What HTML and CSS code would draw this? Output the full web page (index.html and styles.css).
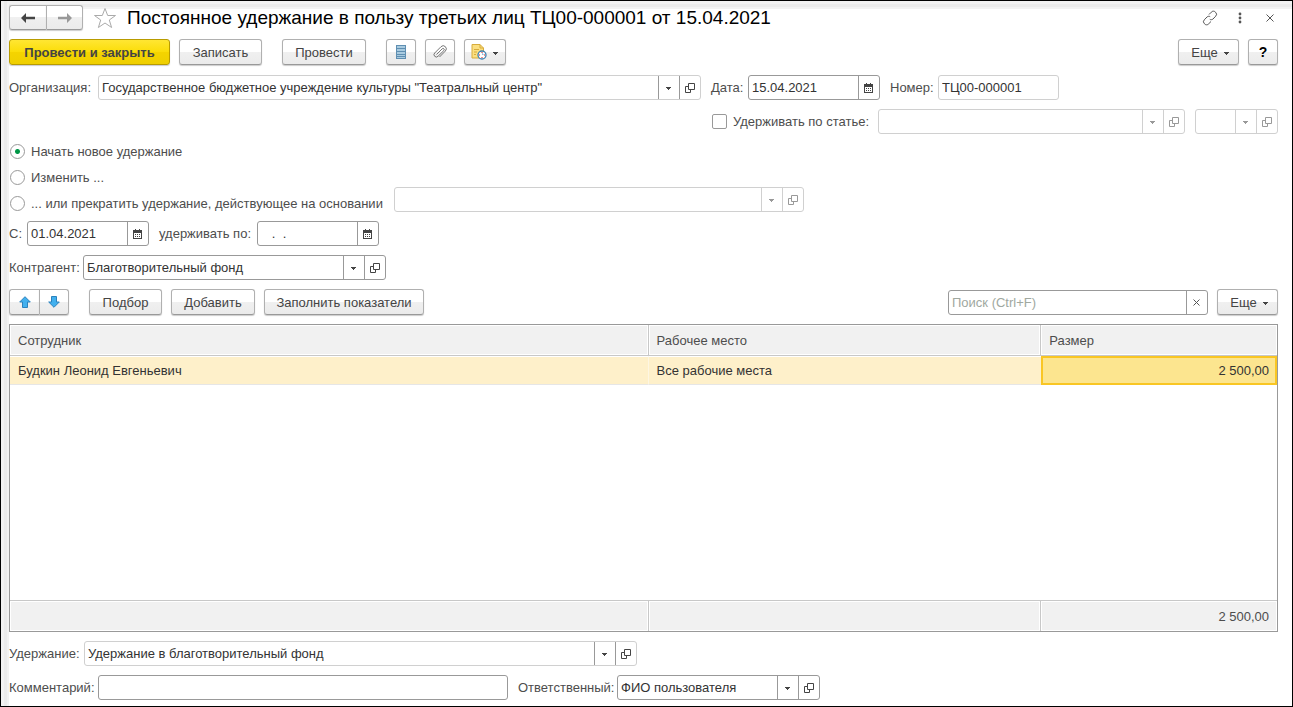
FILE: index.html
```html
<!DOCTYPE html>
<html lang="ru">
<head>
<meta charset="utf-8">
<title>Постоянное удержание в пользу третьих лиц</title>
<link rel="stylesheet" href="styles.css">
</head>
<body>
<svg class="sprite" aria-hidden="true">
  <symbol id="caret" viewBox="0 0 6 4"><path d="M0 1h5v1H0zM1 2h3v1H1zM2 3h1v1H2z" fill="currentColor"/></symbol>
  <symbol id="open" viewBox="0 0 10 10"><path d="M3.500 .5h6v6h-6zM3.500 3.500h-3v6h5v-3" fill="none" stroke="currentColor"/></symbol>
  <symbol id="cal" viewBox="0 0 10 10"><path d="M0 1h2V0h1v1h3V0h1v1h2v9H0zM1 4v5h7V4z" fill="currentColor" fill-rule="evenodd"/><path d="M2 5h1v1H2zM4 5h1v1H4zM6 5h1v1H6zM2 7h1v1H2zM4 7h1v1H4zM6 7h1v1H6z" fill="currentColor"/></symbol>
</svg>
<main class="window">
  <header class="bar head">
    <div class="group">
      <button class="btn nav" aria-label="Назад"><svg width="14" height="10" viewBox="0 0 14 10"><path d="M0 5 5 0v3.800h9v2.400H5V10z" fill="#444"/></svg></button>
      <button class="btn nav" aria-label="Вперед"><svg width="14" height="10" viewBox="0 0 14 10"><path d="M14 5 9 0v3.800H0v2.400h9V10z" fill="#999"/></svg></button>
    </div>
    <button class="plain star" aria-label="В избранное"><svg width="24" height="22" viewBox="0 0 24 22"><path d="M12 1.500 14.700 8.500H22.500L16.300 13 18.600 20.500 12 16 5.400 20.500 7.700 13 1.500 8.500H9.300Z" fill="#fff" stroke="#aaa"/></svg></button>
    <h1 class="title">Постоянное удержание в пользу третьих лиц ТЦ00-000001 от 15.04.2021</h1>
    <div class="tools">
      <button class="plain" aria-label="Ссылка"><svg width="16" height="16" viewBox="0 0 16 16" fill="none" stroke="#555"><path d="M7 4.500 9.300 2.200a2.700 2.700 0 0 1 4.300.1 2.700 2.700 0 0 1 .1 3.900L11 9c-1 .9-2.300.9-3.200.3M9 11.500l-2.300 2.300a2.700 2.700 0 0 1-4.300-.1 2.700 2.700 0 0 1-.1-3.900L5 7c1-.9 2.300-.9 3.200-.3"/></svg></button>
      <button class="plain" aria-label="Меню"><svg width="4" height="12" viewBox="0 0 4 12" fill="#555"><circle cx="2" cy="2" r="1.400"/><circle cx="2" cy="6" r="1.400"/><circle cx="2" cy="10" r="1.400"/></svg></button>
      <button class="plain" aria-label="Закрыть"><svg width="8" height="8" viewBox="0 0 8 8" stroke="#555"><path d="m.5.5 7 7m0-7-7 7"/></svg></button>
    </div>
  </header>

  <div class="bar commands">
    <button class="btn primary">Провести и закрыть</button>
    <button class="btn w-save">Записать</button>
    <button class="btn w-m apart">Провести</button>
    <button class="btn w-icon apart" aria-label="Список"><svg width="10" height="14" viewBox="0 0 10 14"><path d="M0 0h10v14H0z" fill="#5f8fb2"/><path d="M1 1h8v2H1zM1 4h8v2H1zM1 7h8v2H1zM1 10h8v1H1zM1 12h8v1H1z" fill="#a9cbe0"/></svg></button>
    <button class="btn w-icon" aria-label="Файлы"><svg width="14" height="14" viewBox="0 0 14 14" fill="none" stroke="#666" stroke-width=".9"><path d="M3.500 9.500 9.200 3.800a1.200 1.200 0 0 1 1.700 1.700L5 11.300a2.300 2.300 0 0 1-3.300-3.300L8 1.700a3 3 0 0 1 4.400 4.300L6.500 12"/></svg></button>
    <button class="btn w-menu" aria-label="Отчеты"><svg width="16" height="16" viewBox="0 0 16 16"><path d="M1 .5h8l3.500 3.500v10H1z" fill="#fbdf80" stroke="#d7ac3c"/><path d="M9 .5V4h3.500M3 5.500h5M3 8h3M3 10.500h2" fill="none" stroke="#d7ac3c"/><circle cx="11" cy="11" r="4" fill="#fff" stroke="#3d7fb0" stroke-width="1.300"/><path d="M11 8.500V11h2z" fill="#8fc0e0"/><path d="M10.500 8h1v1h-1zM10.500 13h1v1h-1zM8 10.500h1v1H8zM13 10.500h1v1h-1z" fill="#e02020"/></svg><svg class="caret"><use href="#caret"/></svg></button>
    <button class="btn w-more push">Еще<svg class="caret"><use href="#caret"/></svg></button>
    <button class="btn w-icon help">?</button>
  </div>

  <div class="row">
    <div class="pair"><label class="l-89" for="org">Организация:</label>
      <div class="field soft f-603"><input id="org" value='Государственное бюджетное учреждение культуры "Театральный центр"'><button aria-label="Выбрать"><svg class="caret"><use href="#caret"/></svg></button><button aria-label="Открыть"><svg class="ico"><use href="#open"/></svg></button></div></div>
    <div class="pair"><label class="l-37" for="date">Дата:</label>
      <div class="field f-132"><input id="date" value="15.04.2021"><button aria-label="Календарь"><svg class="ico"><use href="#cal"/></svg></button></div></div>
    <div class="pair"><label class="l-48" for="num">Номер:</label>
      <div class="field soft f-121"><input id="num" value="ТЦ00-000001"></div></div>
  </div>

  <div class="row end">
    <label class="check"><input type="checkbox">Удерживать по статье:</label>
    <div class="field off f-307"><input aria-label="Статья" disabled><button disabled aria-label="Выбрать"><svg class="caret"><use href="#caret"/></svg></button><button disabled aria-label="Открыть"><svg class="ico"><use href="#open"/></svg></button></div>
    <div class="field off f-83"><input aria-label="Код" disabled><button disabled aria-label="Выбрать"><svg class="caret"><use href="#caret"/></svg></button><button disabled aria-label="Открыть"><svg class="ico"><use href="#open"/></svg></button></div>
  </div>

  <div class="row bottom">
    <div class="radios">
      <label class="radio"><input type="radio" name="mode" checked>Начать новое удержание</label>
      <label class="radio"><input type="radio" name="mode">Изменить ...</label>
      <label class="radio"><input type="radio" name="mode">... или прекратить удержание, действующее на основании</label>
    </div>
    <div class="field off f-410"><input aria-label="Основание" disabled><button disabled aria-label="Выбрать"><svg class="caret"><use href="#caret"/></svg></button><button disabled aria-label="Открыть"><svg class="ico"><use href="#open"/></svg></button></div>
  </div>

  <div class="row">
    <div class="pair"><label class="l-18" for="from">С:</label>
      <div class="field f-122"><input id="from" value="01.04.2021"><button aria-label="Календарь"><svg class="ico"><use href="#cal"/></svg></button></div></div>
    <div class="pair"><label class="l-98" for="to">удерживать по:</label>
      <div class="field f-122"><input id="to" value="&nbsp;&nbsp; .&nbsp; ."><button aria-label="Календарь"><svg class="ico"><use href="#cal"/></svg></button></div></div>
  </div>

  <div class="row">
    <div class="pair"><label class="l-74" for="party">Контрагент:</label>
      <div class="field f-303"><input id="party" value="Благотворительный фонд"><button aria-label="Выбрать"><svg class="caret"><use href="#caret"/></svg></button><button aria-label="Открыть"><svg class="ico"><use href="#open"/></svg></button></div></div>
  </div>

  <div class="bar">
    <div class="group">
      <button class="btn w-icon" aria-label="Вверх"><svg width="12" height="12" viewBox="0 0 12 12"><path d="M6 .7 11.300 6H8.500v5.500h-5V6H.7z" fill="#42b0ee" stroke="#2b82bd"/></svg></button>
      <button class="btn w-icon" aria-label="Вниз"><svg width="12" height="12" viewBox="0 0 12 12"><path d="M6 11.300.7 6h2.800V.5h5V6h2.800z" fill="#42b0ee" stroke="#2b82bd"/></svg></button>
    </div>
    <button class="btn w-s apart">Подбор</button>
    <button class="btn w-m">Добавить</button>
    <button class="btn w-l">Заполнить показатели</button>
    <div class="field f-260 push"><input type="text" aria-label="Поиск" placeholder="Поиск (Ctrl+F)"><button aria-label="Очистить"><svg width="8" height="7" viewBox="0 0 8 7" stroke="#555"><path d="m.5.5 6 6m0-6-6 6"/></svg></button></div>
    <button class="btn w-more">Еще<svg class="caret"><use href="#caret"/></svg></button>
  </div>

  <table class="grid">
    <colgroup><col class="c1"><col class="c2"><col class="c3"></colgroup>
    <thead><tr><th>Сотрудник</th><th>Рабочее место</th><th>Размер</th></tr></thead>
    <tbody>
      <tr class="selected"><td>Будкин Леонид Евгеньевич</td><td>Все рабочие места</td><td class="num current">2 500,00</td></tr>
      <tr class="rest"><td colspan="3"></td></tr>
    </tbody>
    <tfoot><tr><td></td><td></td><td class="num">2 500,00</td></tr></tfoot>
  </table>

  <div class="row">
    <div class="pair"><label class="l-75" for="ded">Удержание:</label>
      <div class="field soft f-553"><input id="ded" value="Удержание в благотворительный фонд"><button aria-label="Выбрать"><svg class="caret"><use href="#caret"/></svg></button><button aria-label="Открыть"><svg class="ico"><use href="#open"/></svg></button></div></div>
  </div>

  <div class="row">
    <div class="pair"><label class="l-89" for="note">Комментарий:</label>
      <div class="field f-410"><input id="note"></div></div>
    <div class="pair"><label class="l-99" for="resp">Ответственный:</label>
      <div class="field f-203"><input id="resp" value="ФИО пользователя"><button aria-label="Выбрать"><svg class="caret"><use href="#caret"/></svg></button><button aria-label="Открыть"><svg class="ico"><use href="#open"/></svg></button></div></div>
  </div>
</main>
</body>
</html>
```

FILE: styles.css
```css
* { box-sizing: border-box; }
body {
  margin: 0;
  background: #fff;
  color: #4d4d4d;
  font: 13px/17px "Liberation Sans", Arial, sans-serif;
}
button, input { font: inherit; color: inherit; margin: 0; }
.sprite { position: absolute; width: 0; height: 0; }
svg { display: block; flex: none; }

.window {
  min-height: 100vh;
  display: flex;
  flex-direction: column;
  gap: 9px;
  padding: 4px 14px 6px 8px;
  border: 1px solid #000;
  background:
    linear-gradient(90deg, #f2f2f2 3px, #ebebeb 3px 6px, #f2f2f2 6px) left / 8px 100% no-repeat,
    linear-gradient(#f2f2f2 3px, #ebebeb 3px 6px, #f2f2f2 6px) top / 100% 8px no-repeat,
    #fff;
}

.bar, .row { display: flex; align-items: center; gap: 9px; }
.row { gap: 10px; }
.row.end { justify-content: flex-end; }
.row.bottom { align-items: flex-end; }
.commands { padding-bottom: 1px; }
.push { margin-left: auto; }
.apart { margin-left: 11px; }

.head { height: 25px; }
.title { margin: 0; flex: 1; color: #000; font-size: 19px; line-height: 24px; font-weight: 400; }
.tools { display: flex; align-items: center; gap: 10px; margin-right: -2px; }
.plain {
  display: flex; align-items: center; justify-content: center;
  min-width: 20px; height: 24px; padding: 0; border: 0; background: none;
}
.star { min-width: 26px; }

.group { display: flex; }
.btn {
  display: flex; align-items: center; justify-content: center; gap: 6px;
  height: 26px; padding: 0;
  border: 1px solid #b0b0b0; border-bottom-color: #999; border-radius: 3px;
  background: linear-gradient(#fff 50%, #f0f0f0 50%, #ebebeb);
  box-shadow: 0 1px 1px #ccc;
  color: #444;
}
.group .btn:first-child { border-radius: 3px 0 0 3px; border-right: 0; }
.group .btn:last-child { border-radius: 0 3px 3px 0; }
.nav { width: 37px; height: 25px; }
.primary {
  width: 161px; border-color: #b89b00; font-weight: 700;
  background: linear-gradient(#ffe633, #fbdd08 50%, #f5d400 50%, #efcf00);
}
.w-s { width: 73px; }
.w-save { width: 83px; }
.w-m { width: 84px; }
.w-l { width: 160px; }
.w-icon { width: 30px; }
.w-menu { width: 42px; }
.w-more { width: 61px; padding-left: 4px; }
.help { color: #000; font-size: 14px; font-weight: 700; }
.caret { width: 6px; height: 4px; }
.btn .caret { margin-top: 2px; }
.ico { width: 10px; height: 10px; }

.pair { display: flex; align-items: center; }
.l-18 { width: 18px; }
.l-37 { width: 37px; }
.l-48 { width: 48px; }
.l-74 { width: 74px; }
.l-75 { width: 75px; }
.l-89 { width: 89px; }
.l-98 { width: 98px; }
.l-99 { width: 99px; }

.field {
  display: flex; height: 25px; overflow: hidden;
  border: 1px solid #999; border-radius: 3px; background: #fff;
}
.field input {
  flex: 1; min-width: 0; padding: 0 3px;
  border: 0; outline: 0; background: none; color: #333;
}
.field input::placeholder { color: #a0a8a0; opacity: 1; }
.field button {
  display: flex; align-items: center; justify-content: center;
  width: 21px; padding: 0;
  border: 0; border-left: 1px solid #999; background: none; color: #444;
}
.field.soft, .field.off { border-color: #d0d0d0; }
.field.off button { border-color: #d0d0d0; color: #999; }
.f-83 { width: 83px; }
.f-121 { width: 121px; }
.f-122 { width: 122px; }
.f-132 { width: 132px; }
.f-203 { width: 203px; }
.f-260 { width: 260px; }
.f-303 { width: 303px; }
.f-307 { width: 307px; }
.f-410 { width: 410px; }
.f-553 { width: 553px; }
.f-603 { width: 603px; }

.check, .radio { display: flex; align-items: center; gap: 6px; white-space: nowrap; }
.check { width: 156px; }
.check input, .radio input {
  appearance: none; flex: none;
  width: 15px; height: 15px;
  border: 1px solid #999; border-radius: 2px; background: #fff;
}
.radios { display: grid; gap: 9px; width: 375px; padding-left: 1px; }
.radio input { border-radius: 50%; }
.radio input:checked { background: radial-gradient(circle, #009646 2px, #fff 3px); }

.grid {
  flex: 1; width: 100%; table-layout: fixed;
  border: 1px solid #999; border-collapse: separate; border-spacing: 0;
}
.c1 { width: 50.400%; }
.c2 { width: 31%; }
.grid th, .grid td { padding: 0 8px; text-align: left; font-weight: 400; }
.grid th, tfoot td {
  height: 31px; background: #f1f1f1;
  border: 0 solid #c8c8c8; border-right-width: 1px;
  box-shadow: inset 0 0 0 1px #fff;
}
.grid th { border-bottom-width: 1px; }
.grid tfoot td { border-top-width: 1px; }
.grid th:last-child, .grid tfoot td:last-child { border-right: 0; }
.selected td {
  height: 29px; color: #333; background: #fef0ca;
  border-top: 1px solid #fff; border-bottom: 1px solid #e6e6e6;
}
.selected td:first-child { border-right: 1px solid #fdf6e2; }
.grid .num { text-align: right; }
.grid .current { padding-right: 6px; border: 2px solid #f9c623; background: #fce58f; }
```
